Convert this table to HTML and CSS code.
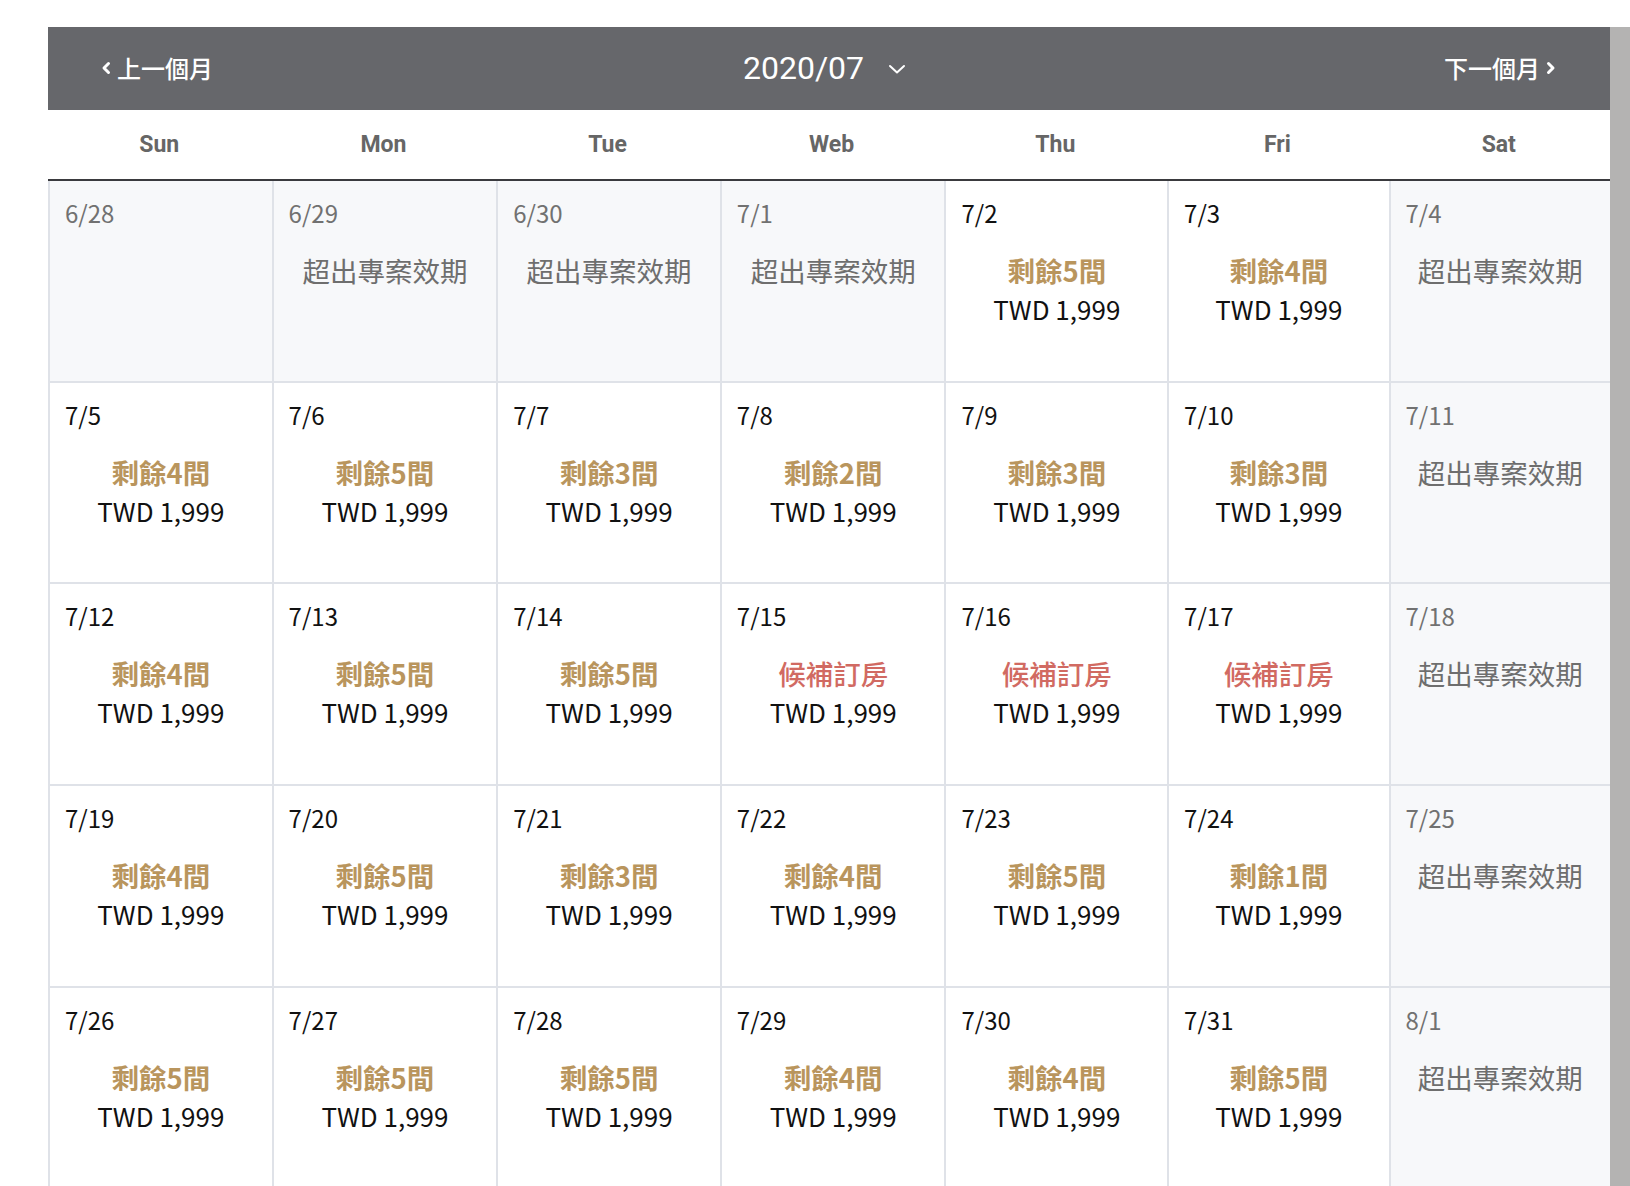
FILE: index.html
```html
<!DOCTYPE html>
<html lang="zh-Hant">
<head>
<meta charset="utf-8">
<title>2020/07</title>
<link rel="stylesheet" href="styles.css">
</head>
<body>
<div class="page">
  <div class="calendar">
    <div class="cal-header">
      <div class="nav nav-prev">
        <svg class="chev" width="10" height="14" viewBox="0 0 10 14"><path d="M7.5 2.5 L3 7 L7.5 11.5" fill="none" stroke="#fff" stroke-width="3" stroke-linecap="round" stroke-linejoin="round"/></svg>
        <span>上一個月</span>
      </div>
      <div class="month">
        <span>2020/07</span>
        <svg class="down" width="18" height="12" viewBox="0 0 18 12"><path d="M2 3 L9 9.5 L16 3" fill="none" stroke="#fff" stroke-width="2" stroke-linecap="round" stroke-linejoin="round"/></svg>
      </div>
      <div class="nav nav-next">
        <span>下一個月</span>
        <svg class="chev" width="10" height="14" viewBox="0 0 10 14"><path d="M2.5 2.5 L7 7 L2.5 11.5" fill="none" stroke="#fff" stroke-width="3" stroke-linecap="round" stroke-linejoin="round"/></svg>
      </div>
    </div>
    <div class="weekdays">
      <div>Sun</div><div>Mon</div><div>Tue</div><div>Web</div><div>Thu</div><div>Fri</div><div>Sat</div>
    </div>
    <div class="grid">
      <div class="cell off"><div class="date">6/28</div></div>
      <div class="cell off"><div class="date">6/29</div><div class="status">超出專案效期</div></div>
      <div class="cell off"><div class="date">6/30</div><div class="status">超出專案效期</div></div>
      <div class="cell off"><div class="date">7/1</div><div class="status">超出專案效期</div></div>
      <div class="cell"><div class="date">7/2</div><div class="status left">剩餘5間</div><div class="price">TWD 1,999</div></div>
      <div class="cell"><div class="date">7/3</div><div class="status left">剩餘4間</div><div class="price">TWD 1,999</div></div>
      <div class="cell off"><div class="date">7/4</div><div class="status">超出專案效期</div></div>

      <div class="cell"><div class="date">7/5</div><div class="status left">剩餘4間</div><div class="price">TWD 1,999</div></div>
      <div class="cell"><div class="date">7/6</div><div class="status left">剩餘5間</div><div class="price">TWD 1,999</div></div>
      <div class="cell"><div class="date">7/7</div><div class="status left">剩餘3間</div><div class="price">TWD 1,999</div></div>
      <div class="cell"><div class="date">7/8</div><div class="status left">剩餘2間</div><div class="price">TWD 1,999</div></div>
      <div class="cell"><div class="date">7/9</div><div class="status left">剩餘3間</div><div class="price">TWD 1,999</div></div>
      <div class="cell"><div class="date">7/10</div><div class="status left">剩餘3間</div><div class="price">TWD 1,999</div></div>
      <div class="cell off"><div class="date">7/11</div><div class="status">超出專案效期</div></div>

      <div class="cell"><div class="date">7/12</div><div class="status left">剩餘4間</div><div class="price">TWD 1,999</div></div>
      <div class="cell"><div class="date">7/13</div><div class="status left">剩餘5間</div><div class="price">TWD 1,999</div></div>
      <div class="cell"><div class="date">7/14</div><div class="status left">剩餘5間</div><div class="price">TWD 1,999</div></div>
      <div class="cell"><div class="date">7/15</div><div class="status wait">候補訂房</div><div class="price">TWD 1,999</div></div>
      <div class="cell"><div class="date">7/16</div><div class="status wait">候補訂房</div><div class="price">TWD 1,999</div></div>
      <div class="cell"><div class="date">7/17</div><div class="status wait">候補訂房</div><div class="price">TWD 1,999</div></div>
      <div class="cell off"><div class="date">7/18</div><div class="status">超出專案效期</div></div>

      <div class="cell"><div class="date">7/19</div><div class="status left">剩餘4間</div><div class="price">TWD 1,999</div></div>
      <div class="cell"><div class="date">7/20</div><div class="status left">剩餘5間</div><div class="price">TWD 1,999</div></div>
      <div class="cell"><div class="date">7/21</div><div class="status left">剩餘3間</div><div class="price">TWD 1,999</div></div>
      <div class="cell"><div class="date">7/22</div><div class="status left">剩餘4間</div><div class="price">TWD 1,999</div></div>
      <div class="cell"><div class="date">7/23</div><div class="status left">剩餘5間</div><div class="price">TWD 1,999</div></div>
      <div class="cell"><div class="date">7/24</div><div class="status left">剩餘1間</div><div class="price">TWD 1,999</div></div>
      <div class="cell off"><div class="date">7/25</div><div class="status">超出專案效期</div></div>

      <div class="cell"><div class="date">7/26</div><div class="status left">剩餘5間</div><div class="price">TWD 1,999</div></div>
      <div class="cell"><div class="date">7/27</div><div class="status left">剩餘5間</div><div class="price">TWD 1,999</div></div>
      <div class="cell"><div class="date">7/28</div><div class="status left">剩餘5間</div><div class="price">TWD 1,999</div></div>
      <div class="cell"><div class="date">7/29</div><div class="status left">剩餘4間</div><div class="price">TWD 1,999</div></div>
      <div class="cell"><div class="date">7/30</div><div class="status left">剩餘4間</div><div class="price">TWD 1,999</div></div>
      <div class="cell"><div class="date">7/31</div><div class="status left">剩餘5間</div><div class="price">TWD 1,999</div></div>
      <div class="cell off"><div class="date">8/1</div><div class="status">超出專案效期</div></div>
    </div>
  </div>
  <div class="scrollbar"></div>
</div>
</body>
</html>
```

FILE: styles.css
```css
html, body {
  margin: 0;
  padding: 0;
  background: #ffffff;
  overflow: hidden;
  height: 100%;
}

body {
  font-family: "Noto Sans CJK TC", "Noto Sans", sans-serif;
  color: #111111;
}

.page {
  display: flex;
  align-items: stretch;
  padding: 27px 0 0 48px;
  height: 100%;
  box-sizing: border-box;
}

.calendar {
  width: 1562px;
  flex: none;
}

.scrollbar {
  flex: 1;
  background: #b4b3b2;
}

.cal-header {
  height: 83px;
  background: #66676b;
  display: grid;
  grid-template-columns: 1fr auto 1fr;
  align-items: center;
  padding: 0 54px 2px 53px;
  box-sizing: border-box;
  color: #ffffff;
}

.nav {
  display: flex;
  align-items: center;
  gap: 6px;
  font-size: 24px;
  font-weight: 500;
  line-height: 1;
}

.nav-next {
  justify-content: flex-end;
}

.chev {
  display: block;
}

.month {
  display: flex;
  align-items: center;
  gap: 24px;
  font-family: Roboto, "Noto Sans", sans-serif;
  font-size: 32px;
  font-weight: 400;
  line-height: 1;
  margin-right: 8px;
}

.down {
  display: block;
  margin-top: 2px;
}

.weekdays {
  display: grid;
  grid-template-columns: 223.5fr 224.5fr 223.5fr 224.5fr 222.5fr 221.3fr 221.3fr;
  column-gap: 2px;
  padding-left: 2px;
  height: 69px;
  align-items: center;
  border-bottom: 2px solid #3a3a3e;
  font-family: Roboto, "Noto Sans", sans-serif;
  font-weight: 700;
  font-size: 23px;
  color: #666666;
  text-align: center;
}

.weekdays div {
  margin-left: -3px;
}

.grid {
  display: grid;
  grid-template-columns: 223.5fr 224.5fr 223.5fr 224.5fr 222.5fr 221.3fr 221.3fr;
  grid-auto-rows: 199.7px;
  gap: 2px;
  padding-left: 2px;
  background: #dfe2e8;
}

.cell {
  background: #ffffff;
  display: flex;
  flex-direction: column;
  align-items: center;
}

.cell.off {
  background: #f7f8fa;
}

.date {
  align-self: stretch;
  padding: 16px 0 0 15px;
  font-size: 24px;
  line-height: 32px;
  color: #111111;
}

.off .date {
  color: #717171;
}

.status {
  margin-top: 21px;
  font-size: 27.5px;
  line-height: 40px;
  color: #6e6e6e;
}

.status.left {
  color: #b9955d;
  font-weight: 700;
}

.status.wait {
  color: #d16a62;
  font-weight: 500;
}

.price {
  font-size: 26px;
  line-height: 38px;
  color: #111111;
}
```
